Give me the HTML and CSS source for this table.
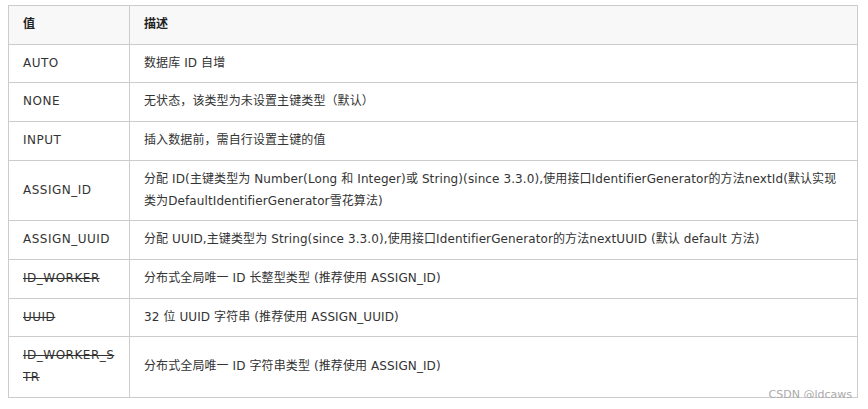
FILE: index.html
```html
<!DOCTYPE html>
<html lang="zh">
<head>
<meta charset="utf-8">
<link rel="stylesheet" href="styles.css">
</head>
<body>
<div class="wrap">
<table class="tbl">
  <thead>
    <tr><th class="c1">值</th><th>描述</th></tr>
  </thead>
  <tbody>
    <tr><td class="c1">AUTO</td><td>数据库 ID 自增</td></tr>
    <tr><td class="c1">NONE</td><td>无状态，该类型为未设置主键类型（默认）</td></tr>
    <tr><td class="c1">INPUT</td><td>插入数据前，需自行设置主键的值</td></tr>
    <tr><td class="c1">ASSIGN_ID</td><td>分配 ID(主键类型为 Number(Long 和 Integer)或 String)(since 3.3.0),使用接口IdentifierGenerator的方法nextId(默认实现类为DefaultIdentifierGenerator雪花算法)</td></tr>
    <tr><td class="c1">ASSIGN_UUID</td><td>分配 UUID,主键类型为 String(since 3.3.0),使用接口IdentifierGenerator的方法nextUUID (默认 default 方法)</td></tr>
    <tr><td class="c1"><s>ID_WORKER</s></td><td>分布式全局唯一 ID 长整型类型 (推荐使用 ASSIGN_ID)</td></tr>
    <tr><td class="c1"><s>UUID</s></td><td>32 位 UUID 字符串 (推荐使用 ASSIGN_UUID)</td></tr>
    <tr><td class="c1"><s>ID_WORKER_STR</s></td><td>分布式全局唯一 ID 字符串类型 (推荐使用 ASSIGN_ID)</td></tr>
  </tbody>
</table>
<div class="mark">CSDN @ldcaws</div>
</div>
</body>
</html>
```

FILE: styles.css
```css
html, body {
  margin: 0;
  padding: 0;
  background: #ffffff;
}
body {
  font-family: "DejaVu Sans", "Noto Sans CJK SC", sans-serif;
  font-size: 12px;
  color: #333333;
}
.wrap {
  position: relative;
  padding: 5px 0 0 8px;
  width: 850px;
}
.tbl {
  border-collapse: collapse;
  width: 850px;
  table-layout: fixed;
}
.tbl th, .tbl td {
  border: 1px solid #cccccc;
  padding: 8px 14px;
  line-height: 21.7px;
  text-align: left;
  vertical-align: middle;
  word-break: break-all;
  letter-spacing: 0.1px;
}
.tbl th {
  background: #f8f8f8;
  font-weight: bold;
  color: #222222;
}
.tbl .c1 {
  width: 92px;
  letter-spacing: 0.5px;
}
.mark {
  position: absolute;
  right: 6px;
  top: 388px;
  font-size: 11px;
  line-height: 13px;
  color: #aaaaaa;
  font-family: "DejaVu Sans", sans-serif;
}
```
